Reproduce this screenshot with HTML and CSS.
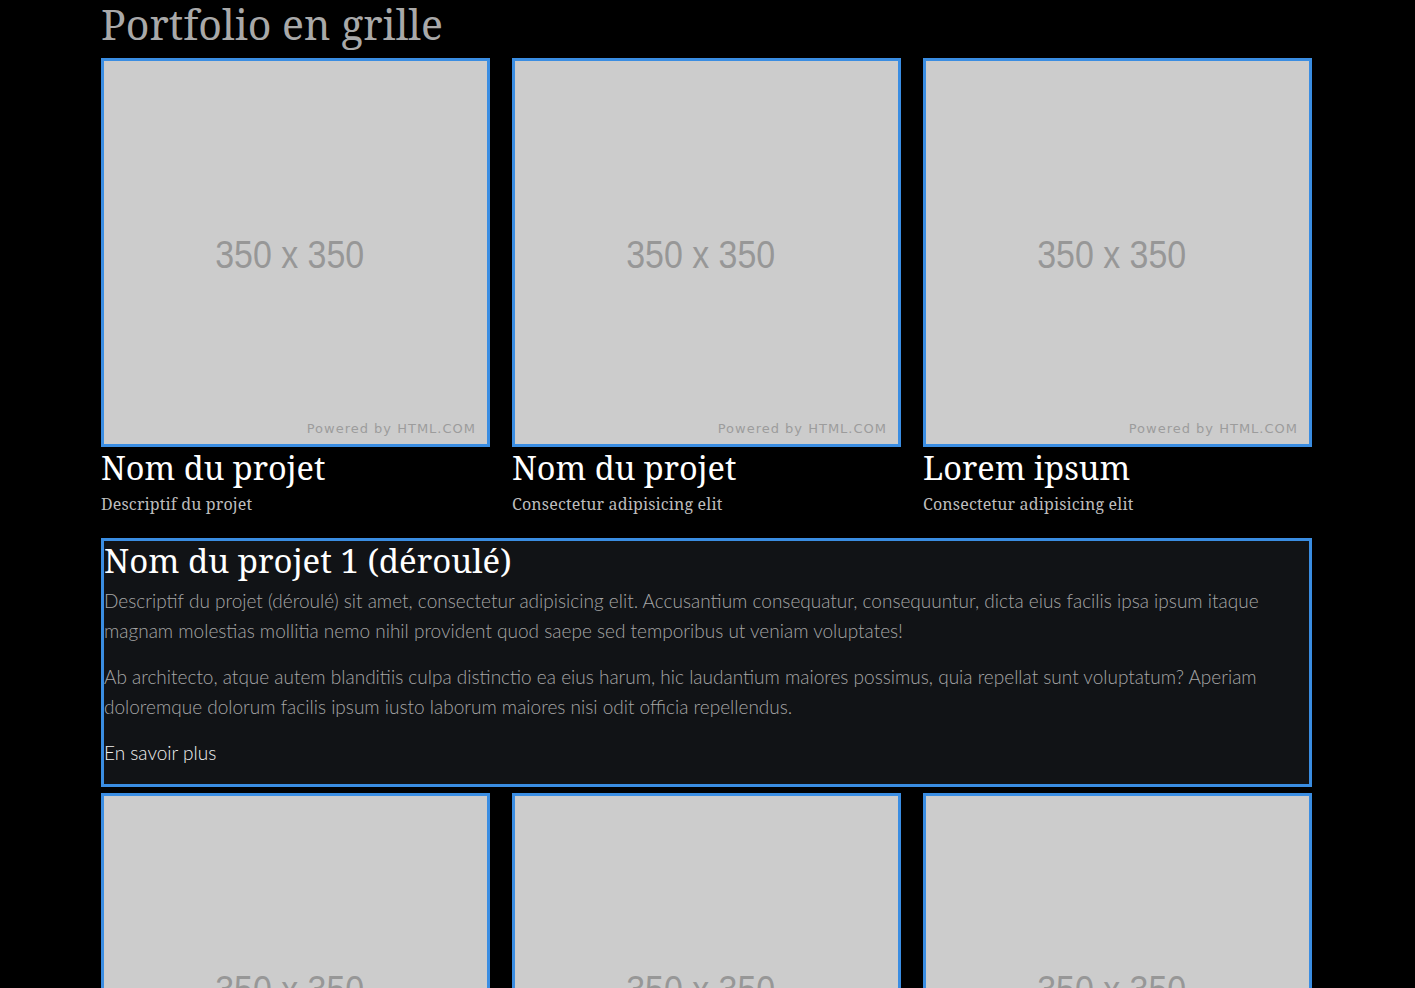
FILE: index.html
```html
<!DOCTYPE html>
<html lang="fr">
<head>
<meta charset="utf-8">
<title>Portfolio en grille</title>
<link rel="stylesheet" href="styles.css">
</head>
<body>
<main class="page">
  <h1 class="title">Portfolio en grille</h1>
  <div class="grid">
    <article class="card">
      <div class="thumb"><span class="thumb-size">350 x 350</span><span class="thumb-credit">Powered by HTML.COM</span></div>
      <h2 class="card-title">Nom du projet</h2>
      <p class="card-desc">Descriptif du projet</p>
    </article>
    <article class="card">
      <div class="thumb"><span class="thumb-size">350 x 350</span><span class="thumb-credit">Powered by HTML.COM</span></div>
      <h2 class="card-title">Nom du projet</h2>
      <p class="card-desc">Consectetur adipisicing elit</p>
    </article>
    <article class="card">
      <div class="thumb"><span class="thumb-size">350 x 350</span><span class="thumb-credit">Powered by HTML.COM</span></div>
      <h2 class="card-title">Lorem ipsum</h2>
      <p class="card-desc">Consectetur adipisicing elit</p>
    </article>
    <section class="detail">
      <h2 class="detail-title">Nom du projet 1 (déroulé)</h2>
      <p class="detail-text">Descriptif du projet (déroulé) sit amet, consectetur adipisicing elit. Accusantium consequatur, consequuntur, dicta eius facilis ipsa ipsum itaque magnam molestias mollitia nemo nihil provident quod saepe sed temporibus ut veniam voluptates!</p>
      <p class="detail-text">Ab architecto, atque autem blanditiis culpa distinctio ea eius harum, hic laudantium maiores possimus, quia repellat sunt voluptatum? Aperiam doloremque dolorum facilis ipsum iusto laborum maiores nisi odit officia repellendus.</p>
      <a class="detail-link" href="#">En savoir plus</a>
    </section>
    <article class="card">
      <div class="thumb"><span class="thumb-size">350 x 350</span><span class="thumb-credit">Powered by HTML.COM</span></div>
    </article>
    <article class="card">
      <div class="thumb"><span class="thumb-size">350 x 350</span><span class="thumb-credit">Powered by HTML.COM</span></div>
    </article>
    <article class="card">
      <div class="thumb"><span class="thumb-size">350 x 350</span><span class="thumb-credit">Powered by HTML.COM</span></div>
    </article>
  </div>
</main>
</body>
</html>
```

FILE: styles.css
```css
html, body {
  margin: 0;
  padding: 0;
  background: #000;
}

body {
  font-family: "Noto Serif", "DejaVu Serif", serif;
  overflow: hidden;
}

.page {
  width: 1211px;
  margin-left: 101px;
}

.title {
  margin: 0;
  height: 58px;
  font-size: 41px;
  line-height: 49px;
  font-weight: 400;
  color: #a9a9a9;
}

.grid {
  display: grid;
  grid-template-columns: repeat(3, 389px);
  column-gap: 22px;
}

.card {
  display: flex;
  flex-direction: column;
}

.thumb {
  position: relative;
  box-sizing: border-box;
  height: 389px;
  border: 3px solid #3a8de2;
  background: #cccccc;
  display: flex;
  align-items: center;
  justify-content: center;
}

.thumb-size {
  font-family: "Liberation Sans", Arial, sans-serif;
  font-size: 39px;
  color: #979797;
  margin-left: -12px;
  margin-top: 4px;
  transform: scaleX(0.87);
}

.thumb-credit {
  position: absolute;
  right: 11px;
  bottom: 8px;
  font-family: "DejaVu Sans", sans-serif;
  font-size: 13px;
  letter-spacing: 1px;
  color: #9c9c9c;
}

.card-title {
  margin: 2px 0 0;
  font-size: 32.5px;
  line-height: 38px;
  font-weight: 400;
  color: #fff;
}

.card-desc {
  margin: 6px 0 0;
  font-size: 16px;
  letter-spacing: 0.15px;
  line-height: 22px;
  color: #bdbdbd;
}

.detail {
  grid-column: 1 / -1;
  margin: 23px 0 6px;
  border: 3px solid #3a8de2;
  background: #111316;
  padding: 0 0 16px;
}

.detail-title {
  margin: 0;
  font-size: 33px;
  line-height: 40px;
  font-weight: 400;
  color: #fff;
}

.detail-text {
  margin: 5px 0 16px;
  font-family: "Lato", "Open Sans", sans-serif;
  font-weight: 300;
  font-size: 19px;
  line-height: 30px;
  color: #a6a6a6;
}

.detail-link {
  font-family: "Lato", "Open Sans", sans-serif;
  font-weight: 300;
  font-size: 19px;
  line-height: 30px;
  color: #f0f0f0;
  text-decoration: none;
}
```
